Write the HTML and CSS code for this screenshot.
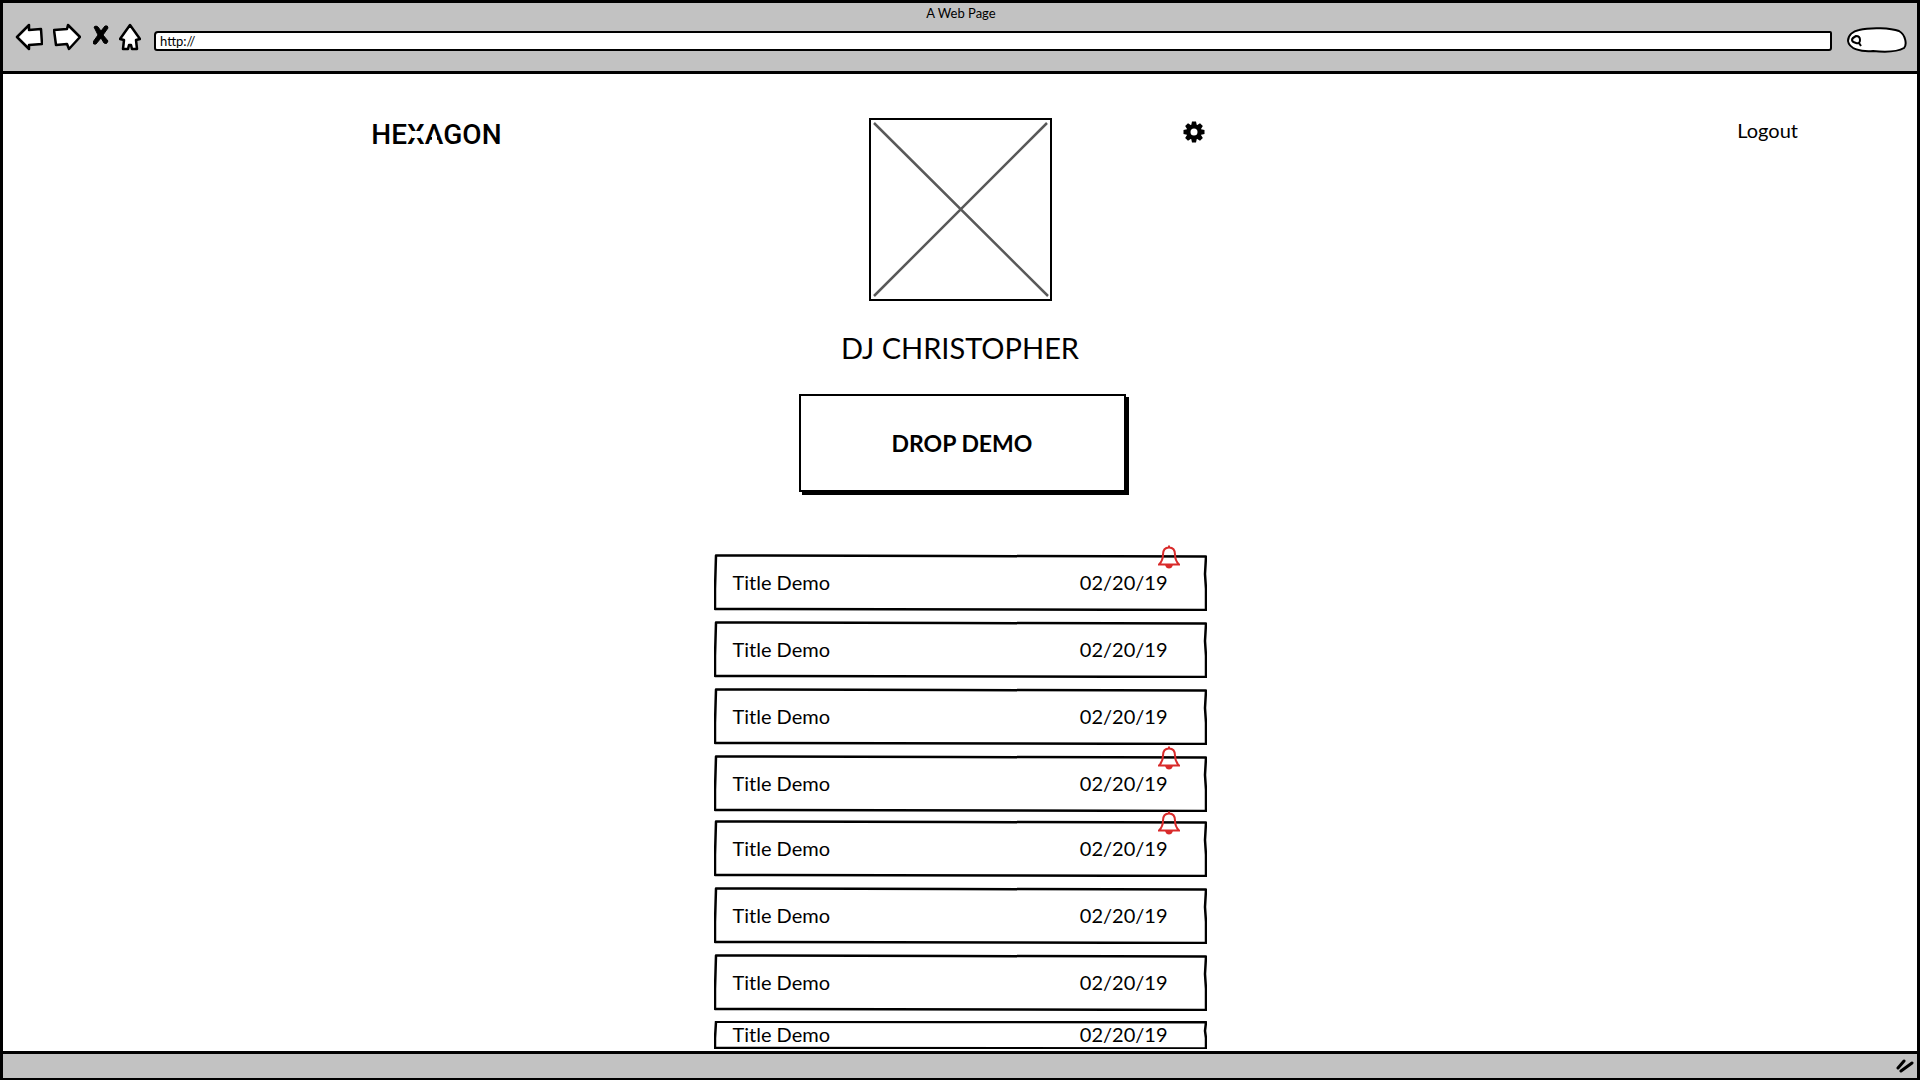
FILE: index.html
```html
<!DOCTYPE html>
<html lang="en">
<head>
<meta charset="utf-8">
<title>A Web Page</title>
<link rel="stylesheet" href="styles.css">
</head>
<body>
<svg class="defs" aria-hidden="true">
  <symbol id="outline" viewBox="0 0 493 57" preserveAspectRatio="none">
    <path d="M2 1.500L240 2L492 2.500L491 20L492 35L492 56L300 55.500L1 55L1 35Z"/>
  </symbol>
  <symbol id="bell" viewBox="0 0 22 24">
    <path d="M11 0.500V3M11 2.500C6.500 2.500 5 6 5 9.500C5 14 3.500 17 1 19.500H21C18.500 17 17 14 17 9.500C17 6 15.500 2.500 11 2.500Z"/>
    <path d="M8.500 21H13.500Q13 22.500 11 22.500T8.500 21Z"/>
  </symbol>
</svg>
<div class="window">
  <header class="chrome">
    <div class="chrome-title">A Web Page</div>
    <div class="toolbar">
      <button class="tool" type="button" aria-label="Back">
        <svg width="28" height="28" viewBox="0 0 28 28"><path d="M2 14L14 2V7L26 6L27 21L14 22L14 26Z"/></svg>
      </button>
      <button class="tool" type="button" aria-label="Forward">
        <svg width="28" height="28" viewBox="0 0 28 28"><path d="M1 7L14 6L15 2L27 14L16 26L14 21L3 22Z"/></svg>
      </button>
      <button class="tool tool-stop" type="button" aria-label="Stop">
        <svg width="16" height="20" viewBox="0 0 16 20"><path class="solid" d="M1 2Q3 0 5 2L8 6L12 1Q15 0 15 3L10 10L15 16Q14 20 11 18L8 13L3 19Q0 20 0 17L5 10Z"/></svg>
      </button>
      <button class="tool" type="button" aria-label="Home">
        <svg width="22" height="28" viewBox="0 0 22 28"><path d="M11 2L21 16L17 17L18 26L13 26L12 22L10 22L9 26L4 26L5 17L1 16Z"/></svg>
      </button>
      <input class="address" type="text" value="http://" aria-label="Address">
      <div class="search">
        <svg class="search-shape" viewBox="0 0 60 26" preserveAspectRatio="none" aria-hidden="true"><path d="M12 3C24 0 44 1 52 4C59 8 60 18 57 21C50 25 36 25 26 24C14 25 2 22 1 14C1 8 6 4 12 3Z"/></svg>
        <svg class="search-glass" width="12" height="12" viewBox="0 0 12 12" aria-hidden="true"><path d="M5 1Q9 1 9 5T5 8T1 5T5 1ZM8 8L10 11"/></svg>
        <input class="search-input" type="search" aria-label="Search">
      </div>
    </div>
  </header>
  <main class="page">
    <div class="top">
      <a class="logo" href="#">HE<span class="cut cut-x">X</span><span class="cut cut-a">A</span>GON</a>
      <div class="profile">
        <svg class="photo" viewBox="0 0 183 183" role="img" aria-label="Photo"><path class="cross" d="M5 5L179 178M178 5L5 178"/><path class="edge" d="M1 1H182V182H1Z"/></svg>
        <button class="settings" type="button" aria-label="Settings">
          <svg width="22" height="22" viewBox="-11 -11 22 22"><path d="M-2-10.500H2L3-6H-3ZM-2 10.500H2L3 6H-3ZM-10.500-2V2L-6 3V-3ZM10.500-2V2L6 3V-3Z"/><path transform="rotate(45)" d="M-2-10.500H2L3-6H-3ZM-2 10.500H2L3 6H-3ZM-10.500-2V2L-6 3V-3ZM10.500-2V2L6 3V-3Z"/><circle class="hub" r="5.500"/></svg>
        </button>
      </div>
      <a class="logout" href="#">Logout</a>
    </div>
    <h1 class="name">DJ CHRISTOPHER</h1>
    <button class="drop" type="button">DROP DEMO</button>
    <ul class="demos">
      <li class="demo"><svg class="outline"><use href="#outline"/></svg><span>Title Demo</span><time>02/20/19</time><svg class="bell"><use href="#bell"/></svg></li>
      <li class="demo"><svg class="outline"><use href="#outline"/></svg><span>Title Demo</span><time>02/20/19</time></li>
      <li class="demo"><svg class="outline"><use href="#outline"/></svg><span>Title Demo</span><time>02/20/19</time></li>
      <li class="demo"><svg class="outline"><use href="#outline"/></svg><span>Title Demo</span><time>02/20/19</time><svg class="bell"><use href="#bell"/></svg></li>
      <li class="demo demo-close"><svg class="outline"><use href="#outline"/></svg><span>Title Demo</span><time>02/20/19</time><svg class="bell"><use href="#bell"/></svg></li>
      <li class="demo"><svg class="outline"><use href="#outline"/></svg><span>Title Demo</span><time>02/20/19</time></li>
      <li class="demo"><svg class="outline"><use href="#outline"/></svg><span>Title Demo</span><time>02/20/19</time></li>
      <li class="demo demo-short"><svg class="outline"><use href="#outline"/></svg><span>Title Demo</span><time>02/20/19</time></li>
    </ul>
  </main>
  <footer class="status">
    <svg width="18" height="14" viewBox="0 0 18 14" aria-hidden="true"><path d="M2 9L8 2M5 12L16 4"/></svg>
  </footer>
</div>
</body>
</html>
```
FILE: styles.css
```css
* { box-sizing: border-box; }

body {
  margin: 0;
  background: #fff;
  color: #000;
  font-family: Lato, sans-serif;
  font-size: 20px;
  line-height: 24px;
}

button {
  padding: 0;
  border: 0;
  background: none;
  color: inherit;
  font: inherit;
}

svg { display: block; }
a { color: inherit; text-decoration: none; }
.defs { position: absolute; width: 0; height: 0; }

.window {
  display: flex;
  flex-direction: column;
  min-height: 100vh;
  border: 3px solid #000;
}

/* Browser chrome */
.chrome {
  background: #c2c2c2;
  border-bottom: 3px solid #000;
  padding: 2px 10px 18px 12px;
}

.chrome-title {
  font-size: 13px;
  line-height: 16px;
  text-align: center;
}

.toolbar {
  display: flex;
  align-items: center;
  gap: 10px;
  height: 32px;
}

.tool svg {
  fill: #fff;
  stroke: #000;
  stroke-width: 2.500px;
  stroke-linejoin: round;
}

.tool-stop { margin: 0 0 4px 2px; }
.tool .solid { fill: #000; stroke-width: 1px; }

.address {
  flex: 1;
  min-width: 0;
  height: 20px;
  margin: 7px 5px 0 3px;
  padding: 0 4px;
  border: 2px solid #000;
  border-radius: 4px 2px 3px 3px;
  background: #fff;
  color: #000;
  font-family: inherit;
  font-size: 13px;
}

.search {
  position: relative;
  width: 60px;
  height: 26px;
  margin-top: 6px;
}

.search-shape {
  width: 100%;
  height: 100%;
  fill: #fff;
  stroke: #000;
  stroke-width: 2px;
}

.search-glass {
  position: absolute;
  left: 4px;
  top: 8px;
  fill: none;
  stroke: #000;
  stroke-width: 2px;
}

.search-input {
  position: absolute;
  inset: 4px 6px 4px 18px;
  width: 36px;
  padding: 0;
  border: 0;
  background: none;
}

/* Page */
.page {
  flex: 1;
  display: flex;
  flex-direction: column;
  align-items: center;
  padding: 44px 0 2px;
}

.top {
  display: grid;
  grid-template-columns: 1fr 493px 1fr;
  align-self: stretch;
}

.logo {
  justify-self: end;
  margin-right: 212px;
  font-family: Roboto, sans-serif;
  font-size: 28px;
  font-weight: 500;
  line-height: 34px;
}

.cut { position: relative; }

.cut::after {
  content: "";
  position: absolute;
  background: #fff;
}

/* The logo's X is open in the middle and its A has no bar */
.cut-x::after { left: 5px; top: 13px; width: 8px; height: 7px; }
.cut-a::after { left: 7px; top: 18px; width: 5px; height: 5px; }

.profile {
  display: grid;
  grid-template-columns: 1fr 183px 1fr;
}

.photo { grid-column: 2; width: 183px; height: 183px; fill: none; }
.photo .edge { stroke: #000; stroke-width: 2px; }
.photo .cross { stroke: #595959; stroke-width: 2.500px; }

.settings {
  justify-self: end;
  align-self: start;
  margin: 3px 2px 0 0;
}

.settings .hub { fill: none; stroke: #000; stroke-width: 4px; }

.logout {
  justify-self: end;
  margin-right: 119px;
}

.name {
  margin: 28px 0;
  font-size: 29px;
  font-weight: 400;
  line-height: 37px;
}

.drop {
  width: 327px;
  height: 98px;
  margin-left: 4px;
  border: 2px solid #000;
  box-shadow: 3px 3px #000;
  font-size: 23px;
  font-weight: 700;
}

.demos {
  display: flex;
  flex-direction: column;
  gap: 10px;
  width: 493px;
  margin: 62px 0 0;
  padding: 0;
  list-style: none;
}

.demo {
  position: relative;
  display: flex;
  align-items: center;
  justify-content: space-between;
  height: 57px;
  padding: 0 39px 2px 19px;
}

.demo-close { margin-top: -2px; }
.demo-short { height: 28px; }

.outline {
  position: absolute;
  inset: 0;
  width: 100%;
  height: 100%;
  fill: none;
  stroke: #000;
  stroke-width: 2.500px;
  stroke-linejoin: round;
}

.outline use { vector-effect: non-scaling-stroke; }
#outline path { vector-effect: non-scaling-stroke; }

.bell {
  position: absolute;
  right: 27px;
  top: -9px;
  width: 22px;
  height: 24px;
  fill: none;
  stroke: #d92b2b;
  stroke-width: 2px;
}

.status {
  display: flex;
  align-items: center;
  justify-content: flex-end;
  height: 27px;
  padding-right: 3px;
  border-top: 3px solid #000;
  background: #c2c2c2;
}

.status svg { fill: none; stroke: #000; stroke-width: 3px; stroke-linecap: round; }
```
